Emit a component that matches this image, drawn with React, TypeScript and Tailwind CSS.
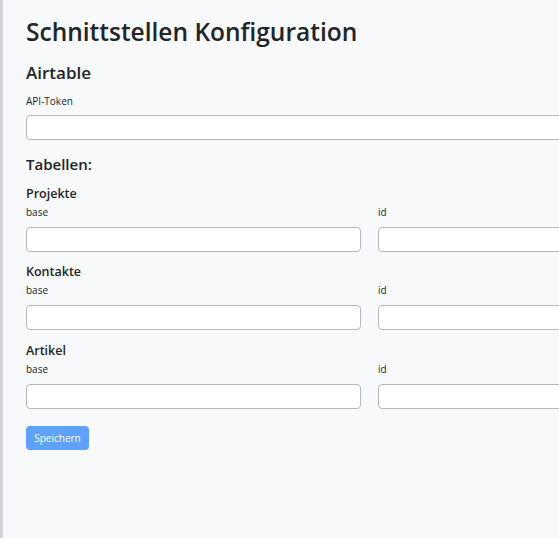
import React from "react";

const tables = ["Projekte", "Kontakte", "Artikel"];

function Field({ label }: { label: string }) {
  return (
    <div className="flex flex-col">
      <label className="text-[10px] leading-[14px] text-[#212529]">{label}</label>
      <input
        type="text"
        className="mt-[8px] h-[25px] w-full rounded-[4px] border border-[#b8b8b8] bg-white px-2 text-[12px] outline-none"
      />
    </div>
  );
}

export default function App() {
  return (
    <div
      className="h-[538px] w-full overflow-hidden border-l-[3px] border-[#d4d4d8] bg-[#f8f9fa] text-[#212529]"
      style={{ fontFamily: '"Open Sans", "Noto Sans", sans-serif' }}
    >
      <div className="w-[710px] pl-[23px]">
        {/* Page title */}
        <h1 className="mt-4 text-[24.5px] font-semibold leading-[31px]">Schnittstellen Konfiguration</h1>

        {/* Airtable section */}
        <h2 className="mt-[14px] text-[17px] font-semibold leading-[24px]">Airtable</h2>
        <label className="mt-[9px] block text-[10px] leading-[14px]">API-Token</label>
        <input
          type="text"
          className="mt-[7px] h-[25px] w-full rounded-[4px] border border-[#b8b8b8] bg-white px-2 text-[12px] outline-none"
        />

        <h3 className="mt-[14px] text-[15px] font-semibold leading-[20px]">Tabellen:</h3>

        {tables.map((t, i) => (
          <div key={t} className={i === 2 ? "mt-[12px]" : "mt-[11px]"}>
            <h4 className="text-[12.5px] font-semibold leading-[18px]">{t}</h4>
            <div className="mt-[2px] grid grid-cols-2 gap-x-[17px]">
              <Field label="base" />
              <Field label="id" />
            </div>
          </div>
        ))}

        <button className="mt-[17px] h-[24px] w-[63px] rounded-[4px] bg-[#5fa2fc] text-[10px] text-white">
          Speichern
        </button>
      </div>
    </div>
  );
}
